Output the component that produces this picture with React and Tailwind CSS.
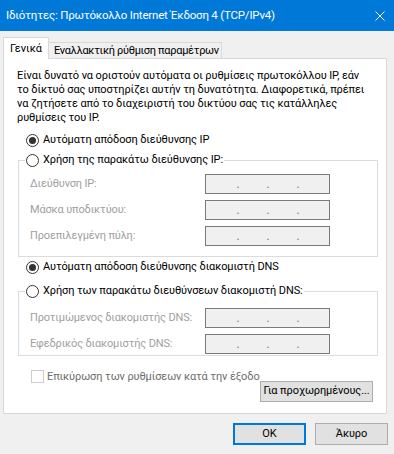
import React from "react";

const font = { fontFamily: 'Roboto, "Liberation Sans", Arial, sans-serif' };

function Radio({ checked, children }) {
  return (
    <div className="flex h-[14px] items-center gap-[4px] whitespace-nowrap">
      <span className="flex h-[13px] w-[13px] shrink-0 items-center justify-center rounded-full border border-[#333333] bg-white">
        {checked && <span className="h-[7px] w-[7px] rounded-full bg-[#333333]" />}
      </span>
      <span className="text-[11px] leading-[14px] tracking-[-0.1px] text-black">{children}</span>
    </div>
  );
}

function IpBox() {
  return (
    <div className="flex h-[20px] w-[125px] shrink-0 items-end border border-[#7a7a7a] bg-[#f0f0f0] pb-[3px] text-[12px] leading-[12px] text-[#7a7a7a]">
      <span className="ml-[30px] w-[4px] text-center">.</span>
      <span className="ml-[26px] w-[4px] text-center">.</span>
      <span className="ml-[26px] w-[4px] text-center">.</span>
    </div>
  );
}

function FieldRow({ label }) {
  return (
    <div className="flex items-center">
      <span className="ml-[5px] w-[175px] shrink-0 whitespace-nowrap text-[11px] leading-[14px] tracking-[-0.15px] text-[#a0a0a0]">
        {label}
      </span>
      <IpBox />
    </div>
  );
}

function Button({ children, focused, className = "" }) {
  return (
    <div
      className={`flex shrink-0 items-center justify-center whitespace-nowrap bg-[#e1e1e1] text-[11px] tracking-[-0.1px] text-black ${
        focused ? "border-2 border-[#0078d7]" : "border border-[#adadad]"
      } ${className}`}
    >
      {children}
    </div>
  );
}

export default function App() {
  return (
    <div className="h-[454px] w-[394px] overflow-hidden bg-[#f0f0f0]" style={font}>
      {/* title bar */}
      <div className="flex h-[31px] items-center justify-between bg-[#0078d7] pl-[6px] pr-[9px]">
        <span className="whitespace-nowrap text-[11.5px] tracking-[-0.2px] text-white">
          Ιδιότητες: Πρωτόκολλο Internet Έκδοση 4 (TCP/IPv4)
        </span>
        <svg width="10" height="10" viewBox="0 0 10 10">
          <path d="M0.5 0.5 L9.5 9.5 M9.5 0.5 L0.5 9.5" stroke="#ffffff" strokeWidth="1" fill="none" />
        </svg>
      </div>

      {/* tabs */}
      <div className="flex items-end pl-[3px] pt-[6px]">
        <div className="relative z-10 mb-[-1px] flex h-[22px] w-[46px] shrink-0 items-start whitespace-nowrap border border-b-0 border-[#d9d9d9] bg-white pl-[6px] pt-[4px] text-[11px] leading-[14px] text-black">
          Γενικά
        </div>
        <div className="flex h-[16px] w-[173px] shrink-0 items-center whitespace-nowrap border-r border-t border-[#d9d9d9] pl-[5px] text-[11px] leading-[14px] tracking-[-0.3px] text-black">
          Εναλλακτική ρύθμιση παραμέτρων
        </div>
      </div>

      {/* panel */}
      <div className="ml-[3px] w-[384px] border border-[#d9d9d9] bg-white pb-[11px] pl-[13px] pr-[13px] pt-[10px]">
        <p className="whitespace-nowrap text-[11px] leading-[14px] tracking-[-0.1px] text-black">
          Είναι δυνατό να οριστούν αυτόματα οι ρυθμίσεις πρωτοκόλλου IP, εάν
          <br />
          το δίκτυό σας υποστηρίζει αυτήν τη δυνατότητα. Διαφορετικά, πρέπει
          <br />
          να ζητήσετε από το διαχειριστή του δικτύου σας τις κατάλληλες
          <br />
          ρυθμίσεις του IP.
        </p>

        <div className="ml-[9px] mt-[8px]">
          <Radio checked>Αυτόματη απόδοση διεύθυνσης IP</Radio>
        </div>

        <fieldset className="ml-[1px] mt-[6px] w-[360px] border border-[#dcdcdc] pb-[10px] pl-[6px]">
          <legend className="px-[1px]">
            <Radio>Χρήση της παρακάτω διεύθυνσης IP:</Radio>
          </legend>
          <div className="mt-[7px] flex flex-col gap-[6px]">
            <FieldRow label="Διεύθυνση IP:" />
            <FieldRow label="Μάσκα υποδικτύου:" />
            <FieldRow label="Προεπιλεγμένη πύλη:" />
          </div>
        </fieldset>

        <div className="ml-[9px] mt-[3px]">
          <Radio checked>Αυτόματη απόδοση διεύθυνσης διακομιστή DNS</Radio>
        </div>

        <fieldset className="ml-[1px] mt-[10px] w-[360px] border border-[#dcdcdc] pb-[1px] pl-[6px]">
          <legend className="px-[1px]">
            <Radio>Χρήση των παρακάτω διευθύνσεων διακομιστή DNS:</Radio>
          </legend>
          <div className="mt-[10px] flex flex-col gap-[6px]">
            <FieldRow label="Προτιμώμενος διακομιστής DNS:" />
            <FieldRow label="Εφεδρικός διακομιστής DNS:" />
          </div>
        </fieldset>

        <div className="ml-[14px] mt-[14px] flex h-[13px] items-center gap-[3px]">
          <span className="h-[13px] w-[13px] shrink-0 border border-[#cccccc] bg-white" />
          <span className="whitespace-nowrap text-[11px] leading-[14px] tracking-[-0.1px] text-[#6d6d6d]">
            Επικύρωση των ρυθμίσεων κατά την έξοδο
          </span>
        </div>

        <div className="mt-[-2px] flex justify-end">
          <Button className="h-[21px] w-[113px]">Για προχωρημένους...</Button>
        </div>
      </div>

      {/* footer */}
      <div className="mt-[9px] flex justify-end gap-[9px] pr-[6px]">
        <Button focused className="h-[22px] w-[73px]">
          OK
        </Button>
        <Button className="h-[22px] w-[73px]">Άκυρο</Button>
      </div>
    </div>
  );
}
